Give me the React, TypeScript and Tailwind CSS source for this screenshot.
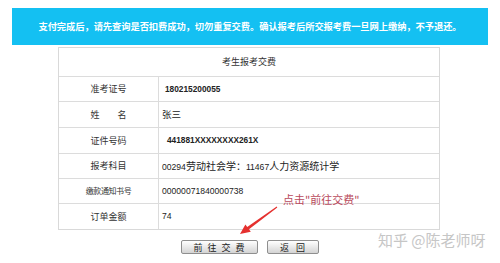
const rows = [
  { label: "准考证号", h: "h-[25px]", size: "text-[9px]" },
  { label: "姓　　名", h: "h-[26px]", size: "text-[9px]" },
  { label: "证件号码", h: "h-[26px]", size: "text-[9px]" },
  { label: "报考科目", h: "h-[25px]", size: "text-[9px]" },
  { label: "缴款通知书号", h: "h-[25px]", size: "text-[8px] tracking-[-0.4px]" },
  { label: "订单金额", h: "h-[26px]", size: "text-[9px]" },
];

function Value({ i }: { i: number }) {
  const num = "font-['Liberation_Sans','Noto_Sans_CJK_SC',sans-serif]";
  if (i === 0)
    return <span className={`${num} font-bold text-[8.3px] pl-[6px]`}>180215200055</span>;
  if (i === 1) return <span className="text-[9.5px] pl-[3px]">张三</span>;
  if (i === 2)
    return <span className={`${num} font-bold text-[8.3px] pl-[8px]`}>441881XXXXXXXX261X</span>;
  if (i === 3)
    return (
      <span className="text-[10px] pl-[3px]">
        <span className={`${num} text-[8.6px]`}>00294</span>劳动社会学：
        <span className={`${num} text-[8.6px]`}>11467</span>人力资源统计学
      </span>
    );
  if (i === 4)
    return <span className={`${num} text-[8.6px] pl-[3px]`}>00000071840000738</span>;
  return <span className={`${num} text-[8.6px] pl-[3px]`}>74</span>;
}

function Btn({ chars, w, gap }: { chars: string[]; w: string; gap: string }) {
  return (
    <button
      className={`${w} h-[14px] rounded-[2px] border border-[#8f8f8f] bg-gradient-to-b from-white to-[#d4d4d4] flex items-center justify-center ${gap} text-[9px] leading-none text-[#222]`}
    >
      {chars.map((c) => (
        <span key={c}>{c}</span>
      ))}
    </button>
  );
}

export default function App() {
  return (
    <div className="relative w-[500px] h-[263px] bg-white overflow-hidden font-['Noto_Sans_CJK_SC',sans-serif] text-[#333]">
      {/* notice band */}
      <div className="mx-[12px] mt-[8px] h-[37px] bg-[#14c0f2] flex items-center justify-center">
        <p className="text-white font-bold text-[9.3px] tracking-[-0.1px] whitespace-nowrap">
          支付完成后，请先查询是否扣费成功，切勿重复交费。确认报考后所交报考费一旦网上缴纳，不予退还。
        </p>
      </div>

      {/* table */}
      <div className="ml-[58px] mt-[2px] w-[382px] border border-[#d9d9d9]">
        <div className="h-[28px] flex items-center justify-center text-[9px] text-[#333]">
          考生报考交费
        </div>
        {rows.map((r, i) => (
          <div key={r.label} className={`flex ${r.h} border-t border-[#dcdcdc]`}>
            <div className={`w-[100px] shrink-0 flex items-center justify-center border-r border-[#dcdcdc] ${r.size} text-[#333] whitespace-nowrap`}>
              {r.label}
            </div>
            <div className="flex-1 flex items-center text-[#222]">
              <Value i={i} />
            </div>
          </div>
        ))}
      </div>

      {/* buttons */}
      <div className="mt-[10px] flex justify-center gap-[9px] pr-[1px]">
        <Btn chars={["前", "往", "交", "费"]} w="w-[77px]" gap="gap-[5px]" />
        <Btn chars={["返", "回"]} w="w-[52px]" gap="gap-[7px]" />
      </div>

      {/* annotation */}
      <span className="absolute left-[283px] top-[194px] text-[11px] leading-none text-[#b94a5c] whitespace-nowrap">
        点击"前往交费"
      </span>
      <svg className="absolute inset-0 pointer-events-none" width="500" height="263" viewBox="0 0 500 263">
        <polygon
          points="277.3,207.4 249,229.3 250.8,231.7 240,234 245.4,224.5 247.2,226.9 276.7,206.6"
          fill="#e5312f"
        />
      </svg>

      {/* watermark */}
      <span className="absolute left-[378px] top-[232px] text-[15px] leading-none text-[#c6c6c6] whitespace-nowrap">
        知乎 @陈老师呀
      </span>
    </div>
  );
}
